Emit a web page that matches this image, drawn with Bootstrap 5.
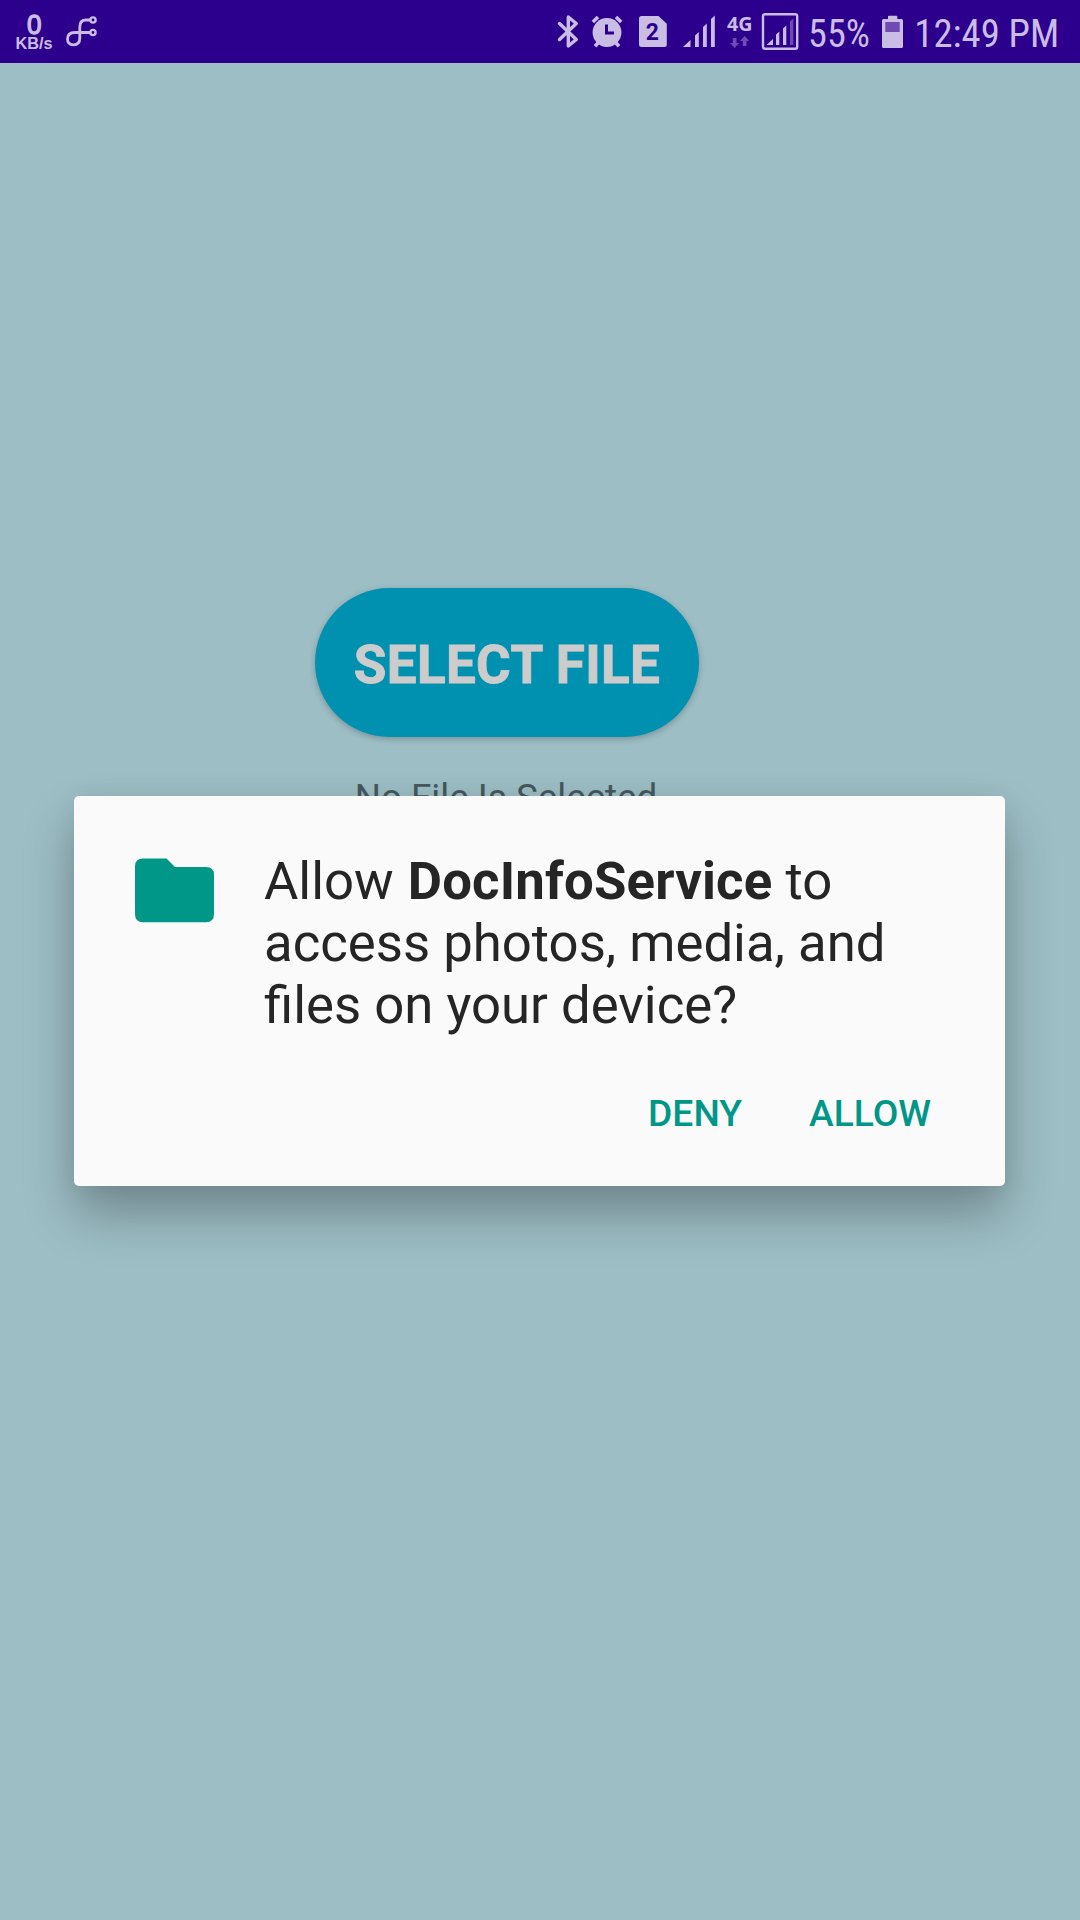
<!DOCTYPE html>
<html lang="en">
<head>
<meta charset="utf-8">
<meta name="viewport" content="width=device-width, initial-scale=1">
<title>DocInfoService</title>
<link href="https://cdn.jsdelivr.net/npm/bootstrap@5.3.0/dist/css/bootstrap.min.css" rel="stylesheet">
<style>
  body { font-family: Roboto, "Noto Sans", sans-serif; background: #9dbec5; height: 1920px; overflow: hidden; }
  .status-bar { height: 63px; background: #2c008d; padding-right: 16px; color: #c9bde4; }
  .status-bar svg { display: block; flex: none; fill: currentColor; font-family: "Roboto Condensed", Roboto, sans-serif; }
  .status-bar .faded { fill: #7049b3; }
  .status-bar .cut { fill: #2c008d; }
  .status-bar .line { fill: none; stroke: currentColor; }
  .file-picker { width: 1014px; padding-top: 525px; }
  .btn-select { width: 384px; height: 149px; background: #0090b0; color: #ccc; font-size: 53px; font-weight: 700; line-height: 1; letter-spacing: .35px; -webkit-text-stroke: .9px #ccc; padding: 5px 0 0; border: 0; box-shadow: 0 2px 6px rgba(0,0,0,.24); }
  .btn-select:hover { background: #0090b0; color: #ccc; }
  .file-status { margin-top: 38px; padding-right: 2px; font-size: 36.8px; line-height: 46px; color: #46595d; }
  .overlay { padding: 796px 1px 0 0; pointer-events: none; }
  .permission { width: 931px; height: 390px; background: #fafafa; border-radius: 5px; padding: 56px 60px 0; box-shadow: 0 28px 50px rgba(0,0,0,.28), 0 0 26px rgba(0,0,0,.05); pointer-events: auto; }
  .permission-text { margin: -2px 0 2px 49px; font-size: 52.7px; line-height: 62px; color: #252525; }
  .permission-text strong { margin-left: 1px; letter-spacing: .18px; }
  .folder { margin-top: 6px; }
  .btn-flat { color: #009788; font-size: 37.2px; font-weight: 500; line-height: 44px; padding: 0; border: 0; }
  .permission-actions { margin-top: 53px; gap: 67px; padding-right: 14px; }
</style>
</head>
<body class="position-relative m-0">
<header class="status-bar d-flex justify-content-between">
  <div class="d-flex">
    <svg width="60" height="63" viewBox="0 0 60 63">
      <text x="27" y="33.500" font-family="Liberation Sans" font-size="28" stroke="currentColor" stroke-width="1.300" textLength="14.500" lengthAdjust="spacingAndGlyphs">0</text>
      <text x="15.500" y="49" font-family="Liberation Sans" font-size="16" font-weight="700" textLength="37" lengthAdjust="spacingAndGlyphs">KB/s</text>
    </svg>
    <svg width="50" height="63" viewBox="60 0 50 63">
      <g class="line" stroke-width="2.8">
        <path d="M90 20H86Q79.800 20 79.800 27V38Q79.800 44.800 73.500 44.800Q67.500 44.800 67.500 39Q67.500 32.500 75 32.500H90"/>
        <circle cx="93" cy="20" r="2.600" stroke-width="2.400"/><circle cx="93" cy="32.500" r="2.600" stroke-width="2.400"/>
      </g>
    </svg>
  </div>
  <div class="d-flex">
    <svg width="36" height="63" viewBox="550 0 36 63"><path class="line" stroke-width="3.400" stroke-linejoin="round" stroke-linecap="round" d="M559.500 23.500L576.300 39.500L568.300 46V17L576.300 23.500L559.500 39.500"/></svg>
    <svg width="44" height="63" viewBox="586 0 44 63">
      <circle cx="607" cy="32.500" r="14.400"/>
      <path class="line" stroke-width="3.600" d="M592.800 22L598 17M621.200 22L616 17M598 43L595 46.300M616 43L619 46.300"/>
      <path class="cut" d="M605 24.500H608V31.500H614V34.500H605Z"/>
    </svg>
    <svg width="44" height="63" viewBox="630 0 44 63">
      <path d="M641.500 16H658.500L666.800 23.800V44.500Q666.800 47 664.300 47H641.500Q639 47 639 44.500V18.500Q639 16 641.500 16Z"/>
      <text class="cut" x="645.800" y="40.300" font-family="Roboto" font-size="23" font-weight="700">2</text>
    </svg>
    <svg width="46" height="63" viewBox="674 0 46 63"><path d="M683 47L690.500 40V47ZM695 47V35.500L698.800 32V47ZM703 47V27L706.800 23.500V47ZM711 47V19L714.800 15.500V47Z"/></svg>
    <svg width="37" height="63" viewBox="720 0 37 63">
      <text x="727" y="31.300" font-family="Noto Sans" font-size="18.800" font-weight="700" textLength="25.500" lengthAdjust="spacingAndGlyphs">4G</text>
      <path class="faded" d="M732.800 38H736.500V43H739.200L734.700 48L730 43H732.800ZM742.800 46H746.500V41H749.200L744.700 36L740 41H742.800Z"/>
    </svg>
    <svg width="47" height="63" viewBox="757 0 47 63">
      <rect class="line" x="763" y="14.200" width="34.200" height="34.600" rx="2" stroke-width="2.400"/>
      <path d="M766.500 45L773 39V45ZM776 45V34.500L779.300 31.500V45ZM783 45V28.500L786.300 25.500V45Z"/>
      <path class="faded" d="M790 45V21.500L793.300 18.500V45Z"/>
    </svg>
    <svg width="72" height="63" viewBox="804 0 72 63"><text x="808" y="46.500" font-size="38.800" textLength="62" lengthAdjust="spacingAndGlyphs">55%</text></svg>
    <svg width="33" height="63" viewBox="876 0 33 63">
      <path d="M888 19V16.500Q888 15.700 888.800 15.700H896.500Q897.300 15.700 897.300 16.500V19H901.500Q903 19 903 20.500V46.500Q903 48 901.500 48H883.500Q882 48 882 46.500V20.500Q882 19 883.500 19Z"/>
      <rect class="faded" x="885.300" y="22" width="14.400" height="10"/>
    </svg>
    <svg width="155" height="63" viewBox="909 0 155 63"><text x="914.300" y="46.500" font-size="38.800" textLength="145" lengthAdjust="spacingAndGlyphs">12:49 PM</text></svg>
  </div>
</header>
<main class="file-picker d-flex flex-column align-items-center">
  <button type="button" class="btn btn-select rounded-pill">SELECT FILE</button>
  <div class="file-status">No File Is Selected</div>
</main>
<div class="overlay position-absolute top-0 start-0 w-100 h-100 d-flex justify-content-center align-items-start">
  <section class="permission d-flex flex-column" role="dialog">
    <div class="d-flex align-items-start">
      <svg class="folder flex-shrink-0" width="81" height="66" viewBox="0 0 81 66"><path fill="#009788" d="M9 .5H32.500L41 9H72Q80 9 80 17V56Q80 64.200 72 64.200H9Q1 64.200 1 56V8.500Q1 .5 9 .5Z"/></svg>
      <div class="permission-text text-nowrap">Allow <strong>DocInfoService</strong> to<br>access photos, media, and<br>files on your device?</div>
    </div>
    <div class="permission-actions d-flex justify-content-end">
      <button type="button" class="btn btn-flat">DENY</button>
      <button type="button" class="btn btn-flat">ALLOW</button>
    </div>
  </section>
</div>
<script src="https://cdn.jsdelivr.net/npm/bootstrap@5.3.0/dist/js/bootstrap.bundle.min.js"></script>
</body>
</html>
